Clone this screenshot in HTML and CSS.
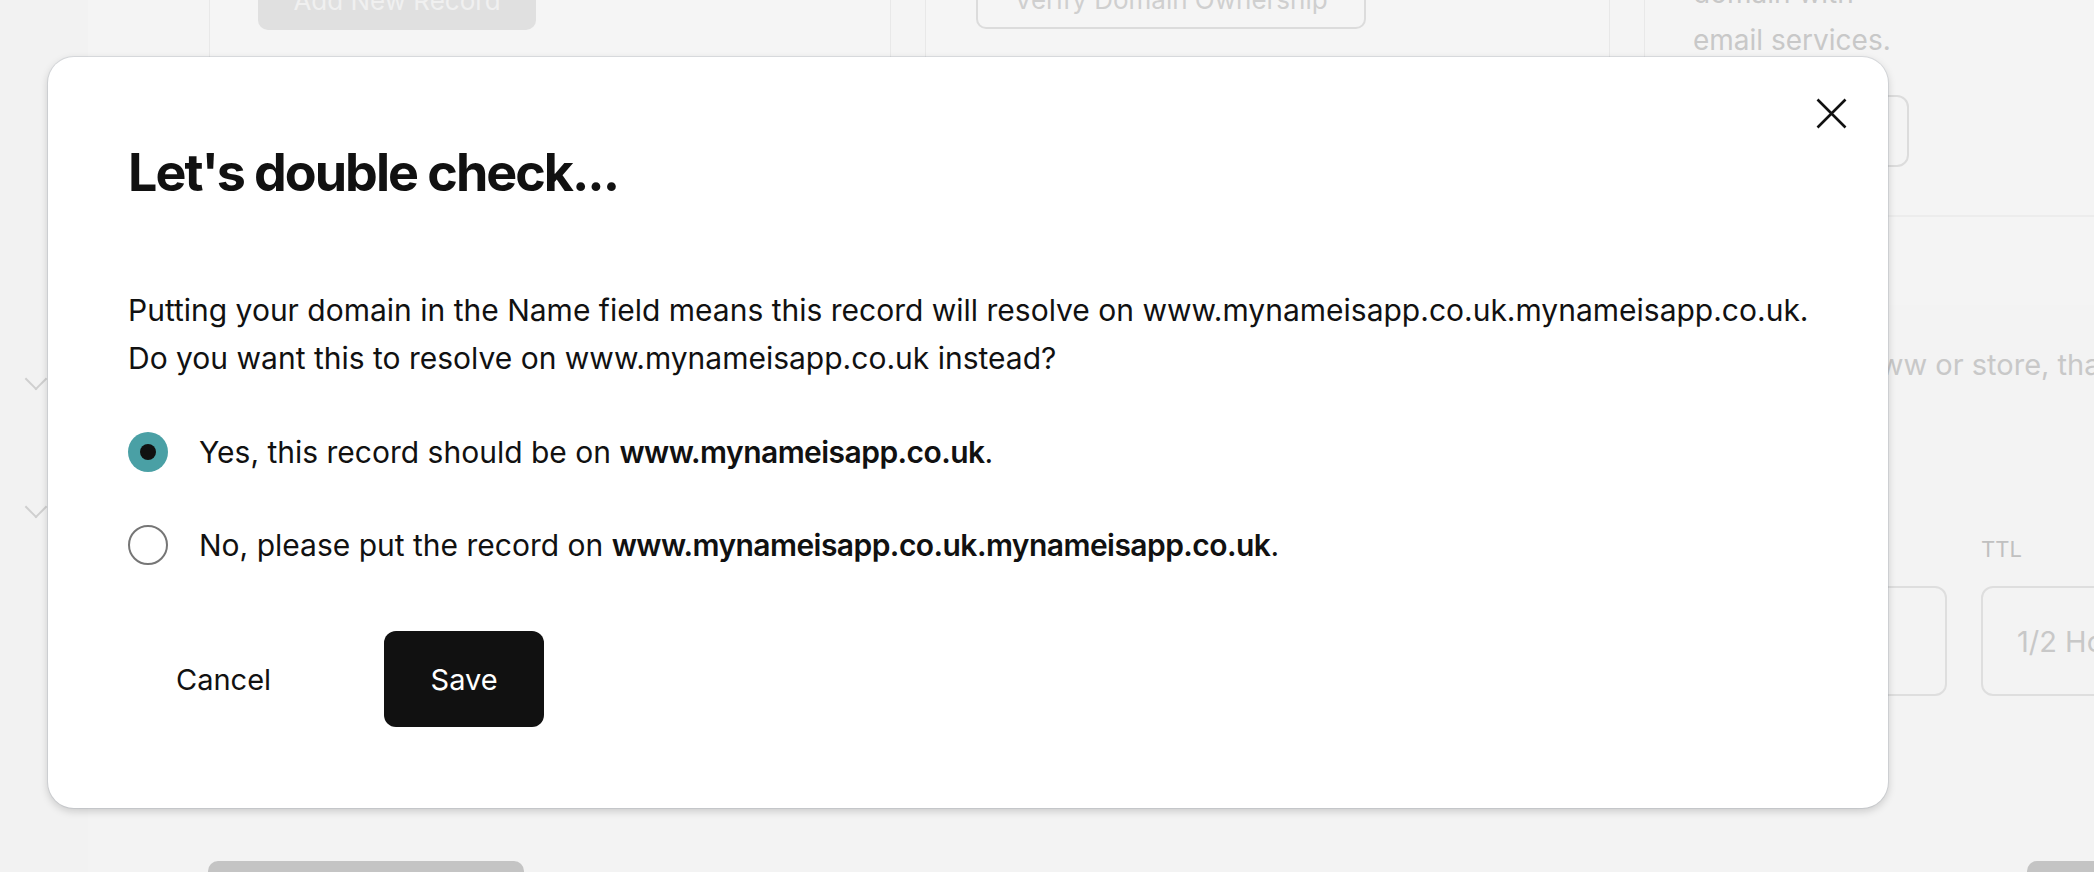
FILE: index.html
```html
<!DOCTYPE html>
<html lang="en">
<head>
<meta charset="utf-8">
<title>Let's double check</title>
<link rel="stylesheet" href="styles.css">
</head>
<body>
<div class="page">
  <aside class="sidebar">
    <span class="chev chev-1"></span>
    <span class="chev chev-2"></span>
  </aside>
  <main class="main">
    <div class="toprow">
      <section class="card card-1"><div class="btn-grey">Add New Record</div></section>
      <section class="card card-2"><div class="btn-outline">Verify Domain Ownership</div></section>
      <section class="card card-3">
        <div class="card-3-inner">
          <p class="muted-text">domain with<br>email services.</p>
          <div class="outline-box"></div>
        </div>
      </section>
    </div>
    <div class="lower">
      <p class="hint">www or store, that points to your site</p>
      <div class="fields">
        <div class="field field-value"><span class="field-label">Value</span><div class="input"></div></div>
        <div class="field field-ttl"><span class="field-label">TTL</span><div class="input">1/2 Hour</div></div>
      </div>
      <div class="lower-buttons">
        <div class="gbtn"></div>
        <div class="gbtn gbtn-right"></div>
      </div>
    </div>
  </main>
</div>

<div class="modal" role="dialog" aria-labelledby="modal-title">
  <div class="modal-header">
    <h1 id="modal-title" class="modal-title">Let's double check...</h1>
    <button class="close-btn" aria-label="Close">
      <svg width="31" height="31" viewBox="0 0 31 31"><path d="M1.5 1.5 L29.5 29.5 M29.5 1.5 L1.5 29.5" stroke="#111" stroke-width="2.6" fill="none"/></svg>
    </button>
  </div>
  <p class="modal-text">Putting your domain in the Name field means this record will resolve on www.mynameisapp.co.uk.mynameisapp.co.uk.<br>Do you want this to resolve on www.mynameisapp.co.uk instead?</p>
  <div class="options">
    <label class="option">
      <span class="radio radio-on"><span class="radio-dot"></span></span>
      <span class="option-text">Yes, this record should be on <b>www.mynameisapp.co.uk</b>.</span>
    </label>
    <label class="option">
      <span class="radio"></span>
      <span class="option-text">No, please put the record on <b>www.mynameisapp.co.uk.mynameisapp.co.uk</b>.</span>
    </label>
  </div>
  <div class="actions">
    <button class="btn btn-cancel">Cancel</button>
    <button class="btn btn-save">Save</button>
  </div>
</div>
</body>
</html>
```

FILE: styles.css
```css
* { box-sizing: border-box; }
html, body {
  margin: 0;
  padding: 0;
}
body {
  width: 2094px;
  height: 872px;
  overflow: hidden;
  background: #f3f3f3;
  font-family: "Inter", "Noto Sans", "Liberation Sans", sans-serif;
  color: #111;
  position: relative;
}

/* ---------- background page (dimmed) ---------- */
.page {
  display: grid;
  grid-template-columns: 88px minmax(0, 1fr);
  height: 872px;
}
.sidebar {
  background: #f2f2f2;
  display: flex;
  flex-direction: column;
  align-items: center;
  padding-top: 371px;
}
.chev {
  width: 16px;
  height: 16px;
  border-right: 2px solid #cfcfcf;
  border-bottom: 2px solid #cfcfcf;
  transform: rotate(45deg);
  margin-left: -16px;
}
.chev-2 { margin-top: 112px; }

.main {
  display: flex;
  flex-direction: column;
  background: #f4f4f4;
  min-width: 0;
  overflow: hidden;
}
.toprow {
  display: grid;
  grid-template-columns: 121px 682px 34px 685px minmax(0, 1fr);
  height: 217px;
  flex: none;
}
.card {
  border-left: 1px solid #e8e8e8;
}
.card-1 {
  grid-column: 2;
  border-right: 1px solid #e8e8e8;
  padding-left: 48px;
  background: #f5f5f5;
}
.card-2 {
  grid-column: 4;
  border-right: 1px solid #e8e8e8;
  padding-left: 50px;
  background: #f5f5f5;
}
.card-3 {
  grid-column: 5;
  border-left: none;
  padding-left: 34px;
  border-bottom: 2px solid #ececec;
}
.card-3-inner {
  border-left: 1px solid #e8e8e8;
  padding-left: 48px;
  height: 100%;
}
.btn-grey {
  width: 278px;
  height: 60px;
  margin-top: -30px;
  background: #e0e0e0;
  border-radius: 10px;
  color: #f0f0f0;
  font-size: 26px;
  display: flex;
  align-items: center;
  justify-content: center;
}
.btn-outline {
  width: 390px;
  height: 60px;
  margin-top: -31px;
  border: 2px solid #dcdcdc;
  border-radius: 10px;
  color: #cfcfcf;
  font-size: 26px;
  display: flex;
  align-items: center;
  justify-content: center;
}
.muted-text {
  margin: -30px 0 0;
  font-size: 28px;
  line-height: 47px;
  color: #c8c8c8;
  white-space: nowrap;
}
.outline-box {
  margin-top: 31px;
  width: 216px;
  height: 72px;
  border: 2px solid #dcdcdc;
  border-radius: 12px;
}

.lower {
  flex: 1;
  display: flex;
  flex-direction: column;
  padding-top: 130px;
  background: linear-gradient(#f4f4f4 0, #f4f4f4 88px, #f3f3f3 88px);
}
.hint {
  margin: 0 0 0 1768px;
  font-size: 29px;
  line-height: 36px;
  color: #c8c8c8;
  white-space: nowrap;
}
.fields {
  display: flex;
  gap: 34px;
  margin-top: 152px;
  margin-left: 1559px;
}
.field {
  display: flex;
  flex-direction: column;
  flex: none;
}
.field-label {
  font-size: 22px;
  line-height: 28px;
  color: #c0c0c0;
  height: 28px;
  margin-bottom: 23px;
}
.field-value .field-label { visibility: hidden; }
.field-value .input { width: 300px; }
.field-ttl .input { width: 220px; }
.input {
  height: 110px;
  border: 2px solid #dedede;
  border-radius: 12px;
  padding-left: 34px;
  display: flex;
  align-items: center;
  font-size: 29px;
  color: #c8c8c8;
  white-space: nowrap;
}
.lower-buttons {
  display: flex;
  margin-top: auto;
  padding-left: 120px;
  height: 11px;
  flex: none;
}
.gbtn {
  width: 316px;
  height: 40px;
  background: #c4c4c4;
  border-radius: 10px;
  flex: none;
}
.gbtn-right {
  margin-left: auto;
  width: 120px;
  margin-right: -53px;
}

/* ---------- modal ---------- */
.modal {
  position: absolute;
  left: 48px;
  top: 57px;
  width: 1840px;
  height: 751px;
  background: #fff;
  border-radius: 26px;
  box-shadow: 0 0 0 1px rgba(150, 160, 170, 0.25), 0 3px 8px rgba(0, 0, 0, 0.18);
  padding: 41px 41px 0 80px;
  display: flex;
  flex-direction: column;
}
.modal-header {
  display: flex;
  justify-content: space-between;
  align-items: flex-start;
}
.modal-title {
  margin: 43px 0 0;
  font-size: 52px;
  line-height: 64px;
  font-weight: 700;
  letter-spacing: -2px;
  color: #111;
}
.close-btn {
  border: none;
  background: none;
  padding: 0;
  width: 31px;
  height: 31px;
  display: block;
  cursor: pointer;
}
.close-btn svg { display: block; }
.modal-text {
  margin: 81px 0 0;
  font-size: 30px;
  line-height: 48px;
  color: #111;
}
.options {
  display: flex;
  flex-direction: column;
  gap: 45px;
  margin-top: 46px;
}
.option {
  display: flex;
  align-items: center;
  gap: 31px;
  height: 48px;
}
.radio {
  width: 40px;
  height: 40px;
  border-radius: 50%;
  border: 2px solid #767676;
  background: #fff;
  display: flex;
  align-items: center;
  justify-content: center;
  flex: none;
}
.radio-on {
  border: none;
  background: #4aa0a5;
}
.radio-dot {
  width: 16px;
  height: 16px;
  border-radius: 50%;
  background: #111;
}
.option-text {
  font-size: 30px;
  line-height: 48px;
  color: #111;
}
.option-text b {
  font-weight: 600;
  letter-spacing: -0.55px;
}
.actions {
  display: flex;
  gap: 65px;
  margin-top: 62px;
}
.btn {
  height: 96px;
  padding: 0 48px;
  border: none;
  border-radius: 12px;
  font-family: inherit;
  font-size: 29px;
  cursor: pointer;
}
.btn-cancel {
  background: transparent;
  color: #111;
}
.btn-save {
  background: #111;
  color: #fff;
  width: 160px;
  padding: 0;
}
```
